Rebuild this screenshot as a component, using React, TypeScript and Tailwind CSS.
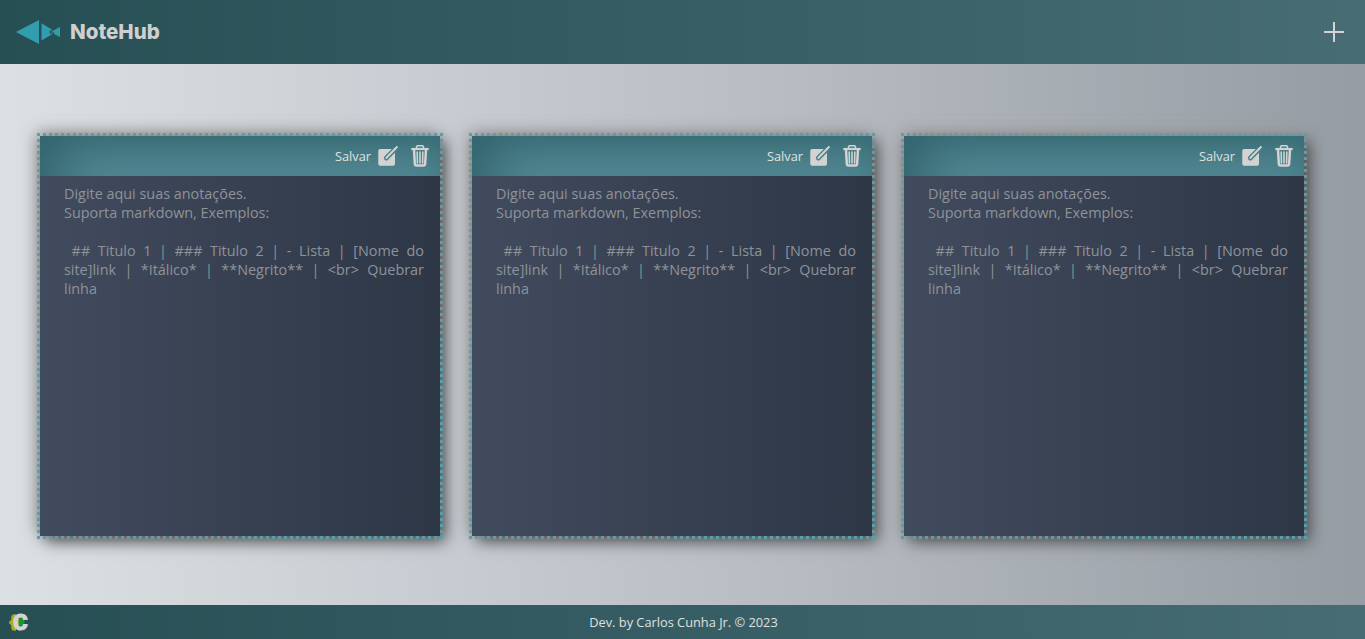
function FishLogo() {
  return (
    <svg width="45" height="26" viewBox="0 0 45 26" className="block shrink-0" fill="#329dae">
      <path d="M0 13 23 1v24Z" />
      <path d="M25.500 4.300 37 11.200 34.300 11.200 33.200 13 34.300 14.800 36.500 15 25.500 21.500Z" />
      <path d="M44 7.800v10.400L37.500 14.500 38 13.200 35.800 12.600Z" />
      <path d="m34.500 12.600 2 1.400" fill="none" stroke="#329dae" />
    </svg>
  );
}

function EditIcon() {
  return (
    <svg width="20" height="20" viewBox="0 0 20 20" className="block overflow-visible" fill="none" strokeLinecap="round">
      <rect x=".3" y="3" width="16.700" height="16.700" rx="1.800" fill="#d3d3d3" />
      <path d="M17 3.300 8.300 12" stroke="#48818b" strokeWidth="4.800" />
      <path d="M18.900 1 8.300 12" stroke="#d3d3d3" strokeWidth="1.900" />
    </svg>
  );
}

function TrashIcon() {
  return (
    <svg width="18" height="22" viewBox="0 0 18 22" className="block" fill="none" stroke="#d3d3d3">
      <path d="M.3 4h17.400" strokeWidth="2.200" />
      <path d="M5.600 3.500V1.800q0-1 1-1h4.800q1 0 1 1v1.700" strokeWidth="1.600" />
      <path d="m3 5 .9 14q.1 1.500 1.500 1.500h7.200q1.400 0 1.500-1.500L15 5" strokeWidth="2.500" />
      <path d="m6.200 7 .2 11M9 7v11m2.800-11-.2 11" strokeWidth="1.600" strokeLinecap="round" />
    </svg>
  );
}

function DottedFrame() {
  return (
    <svg
      width="406"
      height="406"
      viewBox="0 0 406 406"
      className="pointer-events-none absolute -top-[3px] -left-[3px]"
      stroke="#5d9ca8"
      strokeWidth="3"
      strokeDasharray="3 3.015"
      shapeRendering="crispEdges"
    >
      <path d="M0 1.500h406M0 404.500h406M1.500 0v406M404.500 0v406" />
    </svg>
  );
}

function NoteCard() {
  return (
    <article className="relative flex h-[400px] w-[400px] shrink-0 flex-col shadow-[5px_5px_15px_#444,-5px_-5px_15px_#a5a5a5]">
      <div className="flex h-10 items-center justify-end bg-[#619ba6] pr-[11px] text-[12.8px] text-[#e0e0e0] shadow-[inset_20px_20px_50px_#32636c]">
        <span className="mr-[7px] pt-0.5">Salvar</span>
        <button aria-label="Editar"><EditIcon /></button>
        <button aria-label="Excluir" className="ml-[13px]"><TrashIcon /></button>
      </div>
      <div className="flex-1 bg-linear-to-r from-[#414b5e] to-[#2e3746] pt-2 pr-4 pl-6 text-justify text-[14.4px] leading-[19px] whitespace-pre-wrap text-[#8e9399]">
        {"Digite aqui suas anotações.\nSuporta markdown, Exemplos:\n\n ## Titulo 1 | ### Titulo 2 | - Lista | [Nome do site]link | *Itálico* | **Negrito** | <br> Quebrar linha"}
      </div>
      <DottedFrame />
    </article>
  );
}

export default function App() {
  return (
    <div className="flex h-screen flex-col overflow-hidden bg-[linear-gradient(to_right,#dce0e4_0%,#d2d7da_15%,#c5cad1_36%,#b7bcc2_58%,#abb1b7_72%,#959ca3_100%)] font-['Open_Sans',sans-serif]">
      <header className="flex h-16 shrink-0 items-center justify-between bg-linear-to-r from-[#264f54] to-[#476c74] pr-[21px] pl-4">
        <div className="flex items-center gap-[9px]">
          <FishLogo />
          <span className="font-['Inter',sans-serif] text-[20.5px] leading-none font-extrabold text-[#cfcfcf]">NoteHub</span>
        </div>
        <button aria-label="Nova nota">
          <svg width="20" height="20" viewBox="0 0 20 20" className="block" stroke="#d3d3d3" strokeWidth="2">
            <path d="M10 0v20M0 10h20" />
          </svg>
        </button>
      </header>
      <main className="flex flex-1 items-center gap-8 pt-[3px] pl-10">
        <NoteCard />
        <NoteCard />
        <NoteCard />
      </main>
      <footer className="grid h-[34px] shrink-0 grid-cols-[1fr_auto_1fr] items-center bg-linear-to-r from-[#264f54] to-[#476c74] px-[9px] text-[12.8px] text-[#e0e0e0]">
        <svg width="24" height="32" viewBox="0 0 24 32" className="block">
          <path d="M7 9H5.500Q3 9 3 11.500V14L.5 16.500 3 19v2.500Q3 24 5.500 24H7" fill="#a9ae16" stroke="#a9ae16" strokeWidth="1.500" />
          <circle cx="11.500" cy="16" r="4" fill="#129b28" />
          <text x="4" y="23.800" fontSize="22.500" fontWeight="900" fontFamily="Roboto, sans-serif" fill="#d3d3d3" stroke="#d3d3d3" strokeWidth=".9">C</text>
        </svg>
        <span className="translate-x-px pt-0.5">Dev. by Carlos Cunha Jr. © 2023</span>
        <span />
      </footer>
    </div>
  );
}
